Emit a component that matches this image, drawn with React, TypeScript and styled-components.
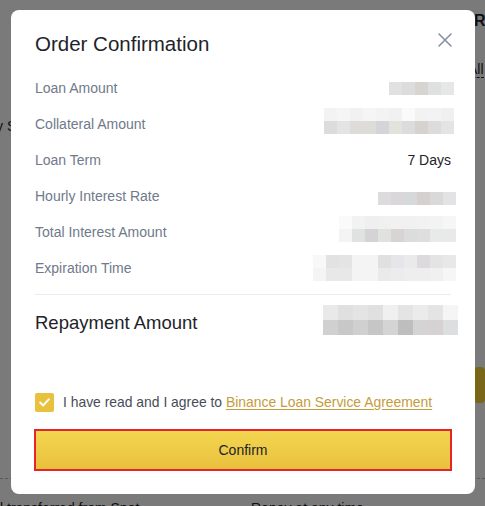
import React from "react";
import styled, { createGlobalStyle } from "styled-components";

const Global = createGlobalStyle`
  html, body { margin: 0; padding: 0; }
  body {
    width: 485px;
    height: 506px;
    overflow: hidden;
    background: #ffffff;
    font-family: "Liberation Sans", Arial, sans-serif;
  }
`;

const Screen = styled.div`
  position: relative;
  width: 485px;
  height: 506px;
  overflow: hidden;
  background: #ffffff;
`;

/* ---------- page behind the dialog ---------- */
const Page = styled.div`
  display: grid;
  grid-template-columns: 251px 223px 1fr;
  grid-template-rows: 42px 40px 88px 197px 36px 76px 1fr;
  height: 506px;
  color: #1e2329;
  font-size: 14px;
`;

const PageCell = styled.div<{ $col: string; $row: string; $align?: string }>`
  grid-column: ${(p) => p.$col};
  grid-row: ${(p) => p.$row};
  display: flex;
  align-items: ${(p) => p.$align ?? "center"};
  white-space: nowrap;
  overflow: hidden;
`;

const PageHeading = styled.span`
  font-size: 16px;
  font-weight: 700;
`;

const DashedLink = styled.span`
  border-bottom: 1px dashed #1e2329;
  line-height: 16px;
  margin: 0 0 4px -6px;
`;

const CutText = styled.span`
  margin-left: -4px;
`;

const PageButton = styled.div`
  width: 100%;
  height: 36px;
  background: #fcd535;
  border-radius: 4px;
`;

const DashedRule = styled.div`
  grid-column: 1 / -1;
  grid-row: 6;
  align-self: end;
  border-bottom: 1px dashed #b7bdc6;
`;

const BottomText = styled.span`
  padding-top: 19px;
  line-height: 20px;
`;

/* ---------- overlay + dialog ---------- */
const Overlay = styled.div`
  position: absolute;
  inset: 0;
  background: rgba(0, 0, 0, 0.52);
  padding: 10px 0 0 11px;
  box-sizing: border-box;
`;

const Dialog = styled.div`
  width: 464px;
  height: 484px;
  background: #ffffff;
  border-radius: 8px;
  display: flex;
  flex-direction: column;
  padding: 0 24px 24px;
  box-sizing: border-box;
`;

const Header = styled.div`
  display: flex;
  justify-content: space-between;
  align-items: flex-start;
  padding-top: 20px;
`;

const Title = styled.h2`
  margin: 0;
  font-size: 20.5px;
  line-height: 28px;
  font-weight: 500;
  color: #1e2329;
`;

const CloseButton = styled.button`
  border: 0;
  background: none;
  padding: 0;
  margin: 3px -1px 0 0;
  width: 14px;
  height: 14px;
  display: flex;
  cursor: pointer;
  color: #848e9c;
`;

const Details = styled.div`
  margin-top: 12px;
  display: flex;
  flex-direction: column;
`;

const Row = styled.div<{ $tall?: boolean }>`
  display: flex;
  justify-content: space-between;
  align-items: center;
  height: ${(p) => (p.$tall ? 56 : 36)}px;
`;

const Label = styled.span`
  font-size: 14px;
  color: #707a8a;
`;

const StrongLabel = styled.span`
  font-size: 18.5px;
  font-weight: 500;
  color: #1e2329;
`;

const Value = styled.span`
  font-size: 14px;
  color: #1e2329;
`;

const Divider = styled.div`
  height: 1px;
  background: #eaecef;
  margin-top: 8px;
`;

const Mosaic = styled.div<{ $cols: number; $cell: number; $shift: number; $dy: number }>`
  display: grid;
  grid-template-columns: repeat(${(p) => p.$cols}, ${(p) => p.$cell}px);
  grid-auto-rows: ${(p) => p.$cell}px;
  margin-right: ${(p) => -p.$shift}px;
  transform: translateY(${(p) => p.$dy}px);
  filter: blur(0.4px);
`;

const Tile = styled.div<{ $bg: string }>`
  background: ${(p) => p.$bg};
`;

const Footer = styled.div`
  margin-top: auto;
  display: flex;
  flex-direction: column;
`;

const Agreement = styled.label`
  display: flex;
  align-items: center;
  gap: 9px;
  height: 20px;
  margin-bottom: 18px;
  font-size: 13.9px;
  color: #474d57;
`;

const CheckBox = styled.span`
  width: 19px;
  height: 19px;
  flex-shrink: 0;
  border-radius: 2px;
  background: #e8c13f;
  display: flex;
  align-items: center;
  justify-content: center;
`;

const AgreementLink = styled.a`
  color: #c49c3e;
  text-decoration: underline;
  text-underline-offset: 2px;
`;

const ConfirmButton = styled.button`
  height: 40px;
  width: 100%;
  border: 0;
  border-radius: 0;
  background: linear-gradient(180deg, #f4d651 0%, #e8c03c 100%);
  outline: 2px solid #e4262c;
  outline-offset: -1px;
  font-family: inherit;
  font-size: 14px;
  font-weight: 500;
  color: #1e2329;
  cursor: pointer;
`;

type Pix = { cell: number; shift: number; dy: number; rows: string[][] };

const Pixelated: React.FC<{ data: Pix }> = ({ data }) => (
  <Mosaic $cols={data.rows[0].length} $cell={data.cell} $shift={data.shift} $dy={data.dy}>
    {data.rows.flatMap((r, i) => r.map((c, j) => <Tile key={`${i}-${j}`} $bg={c} />))}
  </Mosaic>
);

const loanAmount: Pix = {
  cell: 13,
  shift: 3,
  dy: 0,
  rows: [["#e1e1e1", "#dcdcdc", "#d7d5d1", "#dfe1e1", "#e7e7e7"]],
};
const collateral: Pix = {
  cell: 13,
  shift: 3,
  dy: -3,
  rows: [
    ["#f3f3f3", "#f5f5f5", "#f1f1f1", "#f5f5f5", "#f3f3f3", "#f1f1f1", "#fafafa", "#f2f2f2", "#f3f3f3", "#f0f0f0"],
    ["#dcdcdc", "#e2e4e6", "#dddcd9", "#dddcd9", "#d5d4d8", "#e3e3de", "#dcdcdc", "#d6d3cf", "#dcdcdc", "#e4e3e6"],
  ],
};
const hourly: Pix = {
  cell: 13,
  shift: 5,
  dy: 2,
  rows: [["#dcdcdc", "#d9d7d9", "#d6d9d9", "#d4d0d0", "#d9d9d9", "#e3e3e6"]],
};
const totalInterest: Pix = {
  cell: 13,
  shift: 5,
  dy: -3,
  rows: [
    ["#fafafa", "#f2f2f2", "#efefef", "#f0f0f0", "#f1f1f1", "#f1f1f1", "#f2f2f2", "#f3f3f3", "#f6f6f6"],
    ["#f4f4f4", "#e0e2e2", "#d6d3d6", "#e0e2e0", "#d8d4d4", "#dcdcdc", "#dedede", "#e8eaea", "#e8eaea"],
  ],
};
const expiration: Pix = {
  cell: 13,
  shift: 5,
  dy: 0,
  rows: [
    ["#f8f8f8", "#e2e2e2", "#e4e4e4", "#f4f4f4", "#f4f4f4", "#e0e0e0", "#e6e6ea", "#eaeaea", "#dcdadc", "#e4e4e4", "#e8e8e8"],
    ["#f4f4f4", "#e8e8e8", "#e8e8e8", "#f4f4f4", "#f4f4f4", "#eaeaea", "#ececec", "#eeeeee", "#eeeeee", "#f0f0f0", "#f6f6f6"],
  ],
};
const repayment: Pix = {
  cell: 15,
  shift: 7,
  dy: -3,
  rows: [
    ["#e9e9e9", "#e0e0e0", "#e4e4e4", "#e0e0e0", "#f0f0f0", "#e4e4e4", "#ebebeb", "#e4e4e4", "#f5f5f5"],
    ["#d0d0d0", "#c8c8c8", "#d0d0d0", "#c6c6c6", "#d4d4d4", "#bebebe", "#d4d4d4", "#d6d2d4", "#dcdedf"],
  ],
};

const rows: { label: string; value: React.ReactNode }[] = [
  { label: "Loan Amount", value: <Pixelated data={loanAmount} /> },
  { label: "Collateral Amount", value: <Pixelated data={collateral} /> },
  { label: "Loan Term", value: <Value>7 Days</Value> },
  { label: "Hourly Interest Rate", value: <Pixelated data={hourly} /> },
  { label: "Total Interest Amount", value: <Pixelated data={totalInterest} /> },
  { label: "Expiration Time", value: <Pixelated data={expiration} /> },
];

export default function App() {
  return (
    <Screen>
      <Global />
      <Page>
        <PageCell $col="3" $row="1">
          <PageHeading>Rate</PageHeading>
        </PageCell>
        <PageCell $col="3" $row="2" $align="flex-end">
          <DashedLink>All</DashedLink>
        </PageCell>
        <PageCell $col="1" $row="3">
          <CutText>y Sources</CutText>
        </PageCell>
        <PageCell $col="3" $row="5">
          <PageButton />
        </PageCell>
        <DashedRule />
        <PageCell $col="1" $row="7" $align="flex-start">
          <BottomText>l transferred from Spot</BottomText>
        </PageCell>
        <PageCell $col="2" $row="7" $align="flex-start">
          <BottomText>Repay at any time</BottomText>
        </PageCell>
      </Page>

      <Overlay>
        <Dialog role="dialog" aria-label="Order Confirmation">
          <Header>
            <Title>Order Confirmation</Title>
            <CloseButton aria-label="Close">
              <svg width="14" height="14" viewBox="0 0 14 14" fill="none">
                <path d="M1 1L13 13M13 1L1 13" stroke="currentColor" strokeWidth="1.5" strokeLinecap="round" />
              </svg>
            </CloseButton>
          </Header>

          <Details>
            {rows.map((r) => (
              <Row key={r.label}>
                <Label>{r.label}</Label>
                {r.value}
              </Row>
            ))}
            <Divider />
            <Row $tall>
              <StrongLabel>Repayment Amount</StrongLabel>
              <Pixelated data={repayment} />
            </Row>
          </Details>

          <Footer>
            <Agreement>
              <CheckBox>
                <svg width="11" height="9" viewBox="0 0 11 9" fill="none">
                  <path d="M1.2 4.6L4.2 7.4L9.8 1.4" stroke="#ffffff" strokeWidth="2" strokeLinecap="round" strokeLinejoin="round" />
                </svg>
              </CheckBox>
              <span>
                I have read and I agree to <AgreementLink>Binance Loan Service Agreement</AgreementLink>
              </span>
            </Agreement>
            <ConfirmButton>Confirm</ConfirmButton>
          </Footer>
        </Dialog>
      </Overlay>
    </Screen>
  );
}
